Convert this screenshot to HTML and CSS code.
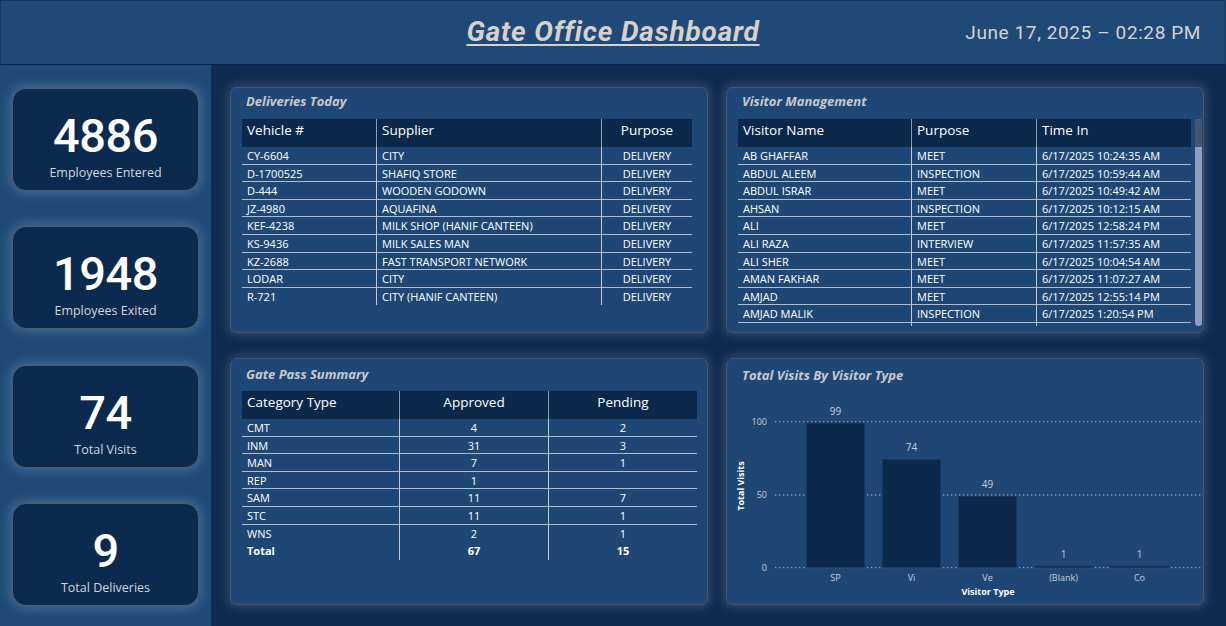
FILE: index.html
```html
<!DOCTYPE html>
<html lang="en">
<head>
<meta charset="utf-8">
<title>Gate Office Dashboard</title>
<link rel="stylesheet" href="styles.css">
</head>
<body>
<header class="topbar">
  <div class="topbar-spacer"></div>
  <h1 class="page-title">Gate Office Dashboard</h1>
  <div class="datetime">June 17, 2025 – 02:28 PM</div>
</header>
<div class="layout">
  <aside class="sidebar">
    <div class="kpi"><div class="kpi-value">4886</div><div class="kpi-label">Employees Entered</div></div>
    <div class="kpi"><div class="kpi-value">1948</div><div class="kpi-label">Employees Exited</div></div>
    <div class="kpi"><div class="kpi-value">74</div><div class="kpi-label">Total Visits</div></div>
    <div class="kpi"><div class="kpi-value">9</div><div class="kpi-label">Total Deliveries</div></div>
  </aside>
  <main class="panels">
    <section class="panel">
      <h2 class="panel-title">Deliveries Today</h2>
      <div class="tbl tbl-deliveries">
        <div class="tr thead"><div>Vehicle #</div><div>Supplier</div><div class="c">Purpose</div></div>
        <div class="tr"><div>CY-6604</div><div>CITY</div><div class="c">DELIVERY</div></div>
        <div class="tr"><div>D-1700525</div><div>SHAFIQ STORE</div><div class="c">DELIVERY</div></div>
        <div class="tr"><div>D-444</div><div>WOODEN GODOWN</div><div class="c">DELIVERY</div></div>
        <div class="tr"><div>JZ-4980</div><div>AQUAFINA</div><div class="c">DELIVERY</div></div>
        <div class="tr"><div>KEF-4238</div><div>MILK SHOP (HANIF CANTEEN)</div><div class="c">DELIVERY</div></div>
        <div class="tr"><div>KS-9436</div><div>MILK SALES MAN</div><div class="c">DELIVERY</div></div>
        <div class="tr"><div>KZ-2688</div><div>FAST TRANSPORT NETWORK</div><div class="c">DELIVERY</div></div>
        <div class="tr"><div>LODAR</div><div>CITY</div><div class="c">DELIVERY</div></div>
        <div class="tr nob"><div>R-721</div><div>CITY (HANIF CANTEEN)</div><div class="c">DELIVERY</div></div>
      </div>
    </section>

    <section class="panel">
      <h2 class="panel-title">Visitor Management</h2>
      <div class="tbl-scroll">
        <div class="tbl-clip">
          <div class="tbl tbl-visitors">
            <div class="tr thead"><div>Visitor Name</div><div>Purpose</div><div>Time In</div></div>
            <div class="tr"><div>AB GHAFFAR</div><div>MEET</div><div>6/17/2025 10:24:35 AM</div></div>
            <div class="tr"><div>ABDUL ALEEM</div><div>INSPECTION</div><div>6/17/2025 10:59:44 AM</div></div>
            <div class="tr"><div>ABDUL ISRAR</div><div>MEET</div><div>6/17/2025 10:49:42 AM</div></div>
            <div class="tr"><div>AHSAN</div><div>INSPECTION</div><div>6/17/2025 10:12:15 AM</div></div>
            <div class="tr"><div>ALI</div><div>MEET</div><div>6/17/2025 12:58:24 PM</div></div>
            <div class="tr"><div>ALI RAZA</div><div>INTERVIEW</div><div>6/17/2025 11:57:35 AM</div></div>
            <div class="tr"><div>ALI SHER</div><div>MEET</div><div>6/17/2025 10:04:54 AM</div></div>
            <div class="tr"><div>AMAN FAKHAR</div><div>MEET</div><div>6/17/2025 11:07:27 AM</div></div>
            <div class="tr"><div>AMJAD</div><div>MEET</div><div>6/17/2025 12:55:14 PM</div></div>
            <div class="tr"><div>AMJAD MALIK</div><div>INSPECTION</div><div>6/17/2025 1:20:54 PM</div></div>
            <div class="tr nob"><div></div><div></div><div></div></div>
          </div>
        </div>
        <div class="scrollbar"><div class="scroll-thumb"></div></div>
      </div>
    </section>

    <section class="panel">
      <h2 class="panel-title panel-title-tall">Gate Pass Summary</h2>
      <div class="tbl tbl-gatepass">
        <div class="tr thead"><div>Category Type</div><div class="c">Approved</div><div class="c">Pending</div></div>
        <div class="tr"><div>CMT</div><div class="c">4</div><div class="c">2</div></div>
        <div class="tr"><div>INM</div><div class="c">31</div><div class="c">3</div></div>
        <div class="tr"><div>MAN</div><div class="c">7</div><div class="c">1</div></div>
        <div class="tr"><div>REP</div><div class="c">1</div><div class="c"></div></div>
        <div class="tr"><div>SAM</div><div class="c">11</div><div class="c">7</div></div>
        <div class="tr"><div>STC</div><div class="c">11</div><div class="c">1</div></div>
        <div class="tr nob"><div>WNS</div><div class="c">2</div><div class="c">1</div></div>
        <div class="tr nob total"><div>Total</div><div class="c">67</div><div class="c">15</div></div>
      </div>
    </section>

    <section class="panel panel-chart">
      <h2 class="panel-title panel-title-chart">Total Visits By Visitor Type</h2>
      <svg class="chart" width="476" height="214" viewBox="0 0 476 214">
        <g class="grid">
          <line x1="48" x2="474" y1="31.7" y2="31.7"/>
          <line x1="48" x2="474" y1="105" y2="105"/>
          <line x1="48" x2="474" y1="177.7" y2="177.7"/>
        </g>
        <g class="ylab">
          <text x="40" y="34.9">100</text>
          <text x="40" y="108.2">50</text>
          <text x="40" y="180.9">0</text>
        </g>
        <g class="bars">
          <rect x="79.5" y="33.2" width="58" height="144.5"/>
          <rect x="155.5" y="69.7" width="58" height="108"/>
          <rect x="231.5" y="106.2" width="58" height="71.5"/>
          <rect x="307.5" y="176.2" width="58" height="1.5"/>
          <rect x="383.5" y="176.2" width="58" height="1.5"/>
        </g>
        <g class="vlab">
          <text x="108.5" y="24.6">99</text>
          <text x="184.5" y="60.9">74</text>
          <text x="260.5" y="97.6">49</text>
          <text x="336.5" y="167.6">1</text>
          <text x="412.5" y="167.6">1</text>
        </g>
        <g class="xlab">
          <text x="108.5" y="191">SP</text>
          <text x="184.5" y="191">Vi</text>
          <text x="260.5" y="191">Ve</text>
          <text x="336.5" y="191">(Blank)</text>
          <text x="412.5" y="191">Co</text>
        </g>
        <text class="axis-title" x="261" y="205">Visitor Type</text>
        <text class="axis-title" transform="translate(16.5 96) rotate(-90)" x="0" y="0">Total Visits</text>
      </svg>
    </section>
  </main>
</div>
</body>
</html>
```

FILE: styles.css
```css
* { box-sizing: border-box; margin: 0; padding: 0; }
html, body { width: 1226px; height: 626px; overflow: hidden; }
body {
  background: #0f2b51;
  font-family: "Open Sans", "Noto Sans", sans-serif;
  color: #ffffff;
}

/* Header */
.topbar {
  height: 65px;
  background: #1f4a78;
  border: 1px solid #163760;
  border-bottom-color: #0c2447;
  display: grid;
  grid-template-columns: 1fr auto 1fr;
  align-items: center;
}
.page-title {
  font-family: Roboto, "Open Sans", sans-serif;
  font-weight: 700;
  font-style: italic;
  font-size: 28px;
  letter-spacing: 0.8px;
  line-height: 34px;
  color: #d7d1cd;
  text-decoration: underline;
  text-decoration-thickness: 2px;
  text-underline-offset: 3px;
  margin-top: -1px;
}
.datetime {
  justify-self: end;
  padding-right: 24px;
  font-family: Roboto, sans-serif;
  font-size: 19px;
  letter-spacing: 0.6px;
  color: #d7d2ce;
}

/* Layout */
.layout { display: flex; height: 561px; }

.sidebar {
  width: 211px;
  flex: none;
  background: #1f4a78;
  padding: 23px 12px 20px 12px;
  display: flex;
  flex-direction: column;
  gap: 35.3px;
}
.kpi {
  height: 103px;
  background: #0c2a4d;
  border: 1px solid #4f5b6c;
  border-radius: 14px;
  box-shadow: 0 0 12px 2px rgba(170, 190, 220, 0.32);
  display: flex;
  flex-direction: column;
  align-items: center;
  padding-top: 23px;
}
.kpi-value {
  font-family: Roboto, sans-serif;
  font-weight: 500;
  font-size: 47px;
  line-height: 48px;
  letter-spacing: -0.5px;
  color: #ffffff;
}
.kpi-label {
  margin-top: 5px;
  font-size: 12.5px;
  line-height: 16px;
  color: #d2d6de;
}

.panels {
  flex: 1;
  display: grid;
  grid-template-columns: 478px 478px;
  grid-template-rows: 246px 247px;
  gap: 25px 18px;
  padding: 22px 22px 21px 19px;
}
.panel {
  background: #1f4776;
  border: 1px solid #45546b;
  border-radius: 7px;
  box-shadow: 0 0 10px 3px rgba(80, 95, 120, 0.55);
  padding-left: 11px;
  overflow: hidden;
}
.panel-title {
  font-size: 13px;
  font-weight: 700;
  font-style: italic;
  color: #c9c9cb;
  line-height: 18px;
  height: 31px;
  padding: 4px 0 0 4px;
}
.panel-title-tall { height: 32px; padding-top: 6px; }
.panel-chart { padding-left: 0; }
.panel-title-chart { padding: 7px 0 0 15px; }

/* Tables */
.tbl {
  display: grid;
  grid-template-rows: 28px;
  grid-auto-rows: 17.6px;
  font-size: 11px;
  line-height: 16px;
}
.tr { display: contents; }
.tr > div {
  padding: 1px 5px 0 5px;
  white-space: nowrap;
  overflow: hidden;
  border-bottom: 1px solid #b3bcc9;
}
.tr > div + div { border-left: 1px solid #c3c8d0; }
.tr.nob > div { border-bottom: 0; }
.thead > div {
  background: #0c284b;
  font-size: 13.5px;
  line-height: 18px;
  padding-top: 2px;
}
.tr.thead > div { border-bottom: 0; }
.thead > div + div { border-left-color: #8c9cb3; }
.c { text-align: center; }
.total > div { font-weight: 700; }

.tbl-deliveries { grid-template-columns: 134px 225px 91px; }
.tbl-visitors { grid-template-columns: 173px 125px 155px; }
.tbl-gatepass { grid-template-columns: 157px 149px 149px; }

.tbl-scroll { display: flex; gap: 4px; }
.tbl-clip { height: 207px; overflow: hidden; }
.scrollbar {
  width: 7px;
  height: 207px;
  border-radius: 4px;
  background: #8c9fbc;
  overflow: hidden;
}
.scroll-thumb {
  height: 28px;
  background: #44566f;
}

/* Chart */
.chart { display: block; }
.chart .grid line {
  stroke: #8d9bb0;
  stroke-width: 1.3;
  stroke-dasharray: 1.3 2.7;
}
.chart .ylab text {
  font-family: "Open Sans", sans-serif;
  font-size: 9px;
  fill: #c8ccd4;
  text-anchor: end;
}
.chart .bars rect {
  fill: #0c284b;
  stroke: #19395f;
  stroke-width: 0.8;
}
.chart .vlab text {
  font-family: "Open Sans", sans-serif;
  font-size: 10px;
  fill: #c8ccd4;
  text-anchor: middle;
}
.chart .xlab text {
  font-family: "Open Sans", sans-serif;
  font-size: 9px;
  fill: #c8ccd4;
  text-anchor: middle;
}
.chart .axis-title {
  font-family: "Open Sans", sans-serif;
  font-size: 9px;
  font-weight: 700;
  fill: #ffffff;
  text-anchor: middle;
}
```
